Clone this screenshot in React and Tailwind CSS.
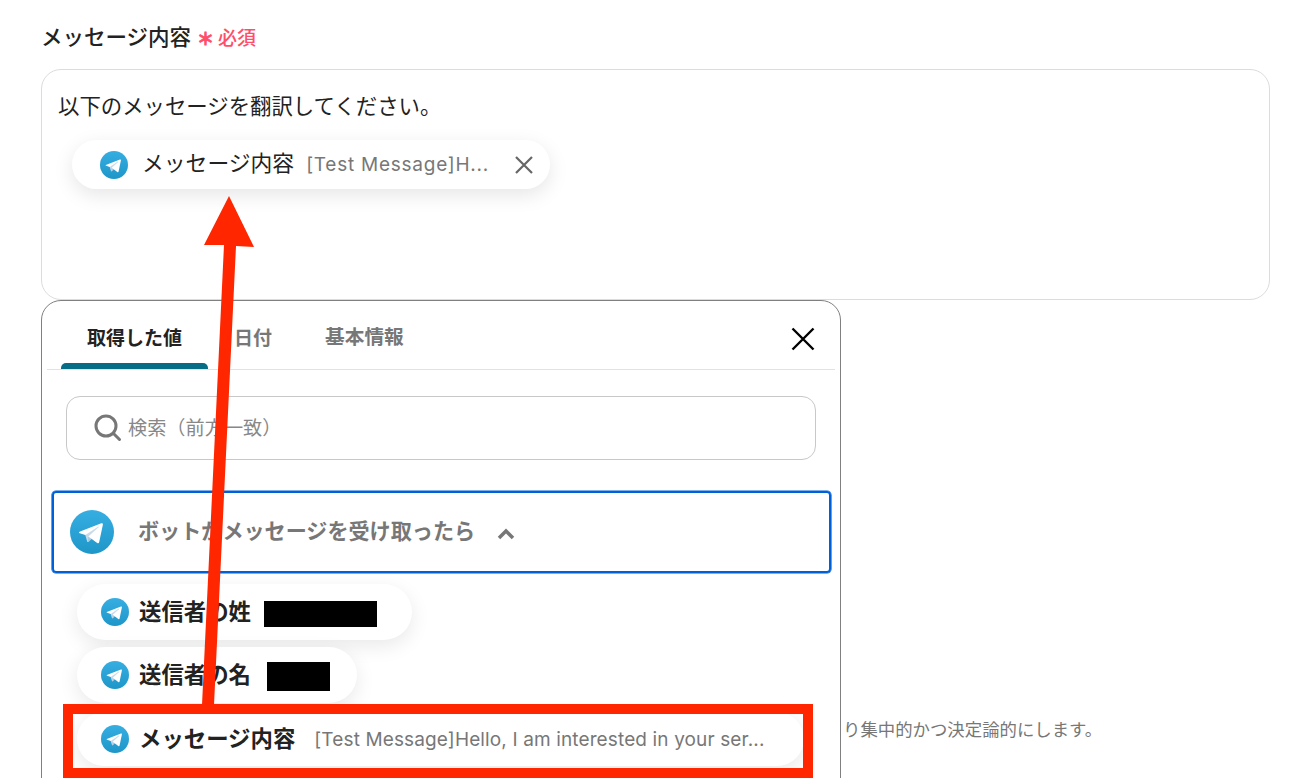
import React from "react";

function Telegram({ size, id }) {
  return (
    <svg width={size} height={size} viewBox="0 0 240 240" className="shrink-0">
      <defs>
        <linearGradient id={id} x1="120" y1="0" x2="120" y2="240" gradientUnits="userSpaceOnUse">
          <stop offset="0" stopColor="#37aee2" />
          <stop offset="1" stopColor="#1e96c8" />
        </linearGradient>
      </defs>
      <circle cx="120" cy="120" r="120" fill={`url(#${id})`} />
      <path d="M98 175c-3.9 0-3.2-1.5-4.6-5.2L82 132.2 170 80" fill="#c8daea" />
      <path d="M98 175c3 0 4.3-1.4 6-3l16-15.6-20-12" fill="#a9c9dd" />
      <path d="M100 144.4l48.4 35.8c5.5 3 9.5 1.5 10.9-5.1L179 82.2c2-8.1-3.1-11.8-8.4-9.4L55 117.5c-7.9 3.2-7.8 7.6-1.4 9.5l29.7 9.3 68.7-43.3c3.2-2 6.2-.9 3.8 1.3" fill="#fff" />
    </svg>
  );
}

function Chip({ id, label, className, children }) {
  return (
    <div className={`flex items-center bg-white rounded-full shadow-[0_6px_20px_rgba(0,0,0,0.09)] ${className}`}>
      <Telegram size={28} id={id} />
      <span className="ml-[10px] text-[22.4px] leading-none text-[#222] whitespace-nowrap font-bold">{label}</span>
      {children}
    </div>
  );
}

export default function App() {
  return (
    <div className="relative w-[1298px] h-[778px] overflow-hidden bg-white font-['Inter','Noto_Sans_CJK_JP',sans-serif] pl-[41px] pr-[28px] pt-[23px]">
      <div className="flex items-center h-[30px]">
        <span className="text-[21.5px] leading-none font-medium text-[#222]">メッセージ内容</span>
        <span className="ml-[6px] mt-[3px] text-[17px] leading-none text-[#ff4d6a] font-bold [-webkit-text-stroke:0.9px_#ff4d6a]">＊</span>
        <span className="ml-[4px] text-[19px] leading-none font-medium text-[#ff4d6a]">必須</span>
      </div>

      <div className="mt-[16px] h-[231px] border border-[#dcdcdc] rounded-[20px] pl-[16px] pt-[22px]">
        <p className="text-[21.4px] leading-[28px] text-[#222]">以下のメッセージを翻訳してください。</p>
        <div className="mt-[20px] ml-[14px] w-[478px] h-[49px] pl-[28px] pr-[15px] flex items-center bg-white rounded-full shadow-[0_6px_20px_rgba(0,0,0,0.1)]">
          <Telegram size={28} id="tg0" />
          <span className="ml-[14px] -mt-[2px] text-[21.8px] leading-none text-[#222] whitespace-nowrap">メッセージ内容</span>
          <span className="ml-[12px] -mt-[1px] text-[19px] leading-none text-[#777] tracking-[0.75px] whitespace-nowrap">[Test Message]H...</span>
          <svg width="22" height="22" viewBox="0 0 22 22" className="ml-auto">
            <path d="M3 3l16 16M19 3L3 19" stroke="#666" strokeWidth="2.2" fill="none" />
          </svg>
        </div>
      </div>

      <div className="flex items-start">
        <div className="relative w-[800px] h-[520px] shrink-0 border border-[#808080] rounded-[20px] bg-white px-[5px]">
          <div className="relative flex items-center h-[69px] border-b border-[#e2e2e2]">
            <div className="relative w-[147px] ml-[14px] h-full flex items-center justify-center pt-[6px]">
              <span className="text-[19px] font-bold leading-none text-[#222]">取得した値</span>
              <div className="absolute left-0 right-0 bottom-0 h-[6px] rounded-t-[5px] bg-[#076d87]" />
            </div>
            <span className="ml-[26px] mt-[6px] text-[19px] font-bold leading-none text-[#777]">日付</span>
            <span className="ml-[53px] mt-[6px] text-[19.7px] font-bold leading-none text-[#777]">基本情報</span>
            <svg width="26" height="26" viewBox="0 0 26 26" className="ml-auto mr-[19px] mt-[8px]">
              <path d="M2.5 2.5l21 21M23.5 2.5l-21 21" stroke="#000" strokeWidth="2.4" fill="none" />
            </svg>
          </div>

          <div className="ml-[19px] mt-[26px] w-[750px] h-[64px] border border-[#c8c8c8] rounded-[14px] flex items-center pl-[27px]">
            <svg width="28" height="28" viewBox="0 0 28 28">
              <circle cx="12" cy="12" r="10" stroke="#777" strokeWidth="3" fill="none" />
              <path d="M19.5 19.5l6 6" stroke="#777" strokeWidth="3" strokeLinecap="round" fill="none" />
            </svg>
            <span className="ml-[6px] mt-[1px] text-[19.2px] leading-none text-[#888]">検索（前方一致）</span>
          </div>

          <div className="ml-[5px] mt-[31px] w-[779px] h-[82px] border-2 border-[#0060d8] rounded-[4px] shadow-[0_0_0_0.6px_#0060d8] flex items-center pl-[16px]">
            <Telegram size={44} id="tg1" />
            <span className="ml-[24px] text-[21.1px] font-bold leading-none text-[#777]">ボットがメッセージを受け取ったら</span>
            <svg width="20" height="14" viewBox="0 0 20 14" className="ml-[21px] mt-[3px]">
              <path d="M3 11l7-7 7 7" stroke="#777" strokeWidth="3.5" fill="none" />
            </svg>
          </div>

          <div className="ml-[30px] mt-[11px] flex flex-col items-start gap-[7px]">
            <Chip id="tg2" label="送信者の姓" className="w-[335px] h-[56px] pl-[24px]">
              <span className="ml-[13px] w-[113px] h-[26px] bg-black mt-[3px]" />
            </Chip>
            <Chip id="tg3" label="送信者の名" className="w-[280px] h-[56px] pl-[24px]">
              <span className="ml-[16px] w-[63px] h-[29px] bg-black mt-[2px]" />
            </Chip>
            <Chip id="tg4" label="メッセージ内容" className="mt-[2px] w-[727px] h-[54px] pl-[24px]">
              <span className="ml-[19px] text-[19px] leading-none text-[#777] tracking-[0.13px] whitespace-nowrap">[Test Message]Hello, I am interested in your ser...</span>
            </Chip>
          </div>
        </div>
        <p className="ml-[2px] mt-[418px] text-[17.4px] leading-[24px] text-[#777] whitespace-nowrap">り集中的かつ決定論的にします。</p>
      </div>

      {/* annotation: red arrow */}
      <svg width="60" height="520" viewBox="0 0 60 520" className="absolute left-[200px] top-[192px]">
        <path d="M29 4L54 55 36 54 14 513 2 513 24 53 4 53Z" fill="#ff2600" />
      </svg>
      {/* annotation: red frame */}
      <div className="absolute left-[63px] top-[704px] w-[750px] h-[74px] border-[10px] border-[#ff2600]" />
    </div>
  );
}
